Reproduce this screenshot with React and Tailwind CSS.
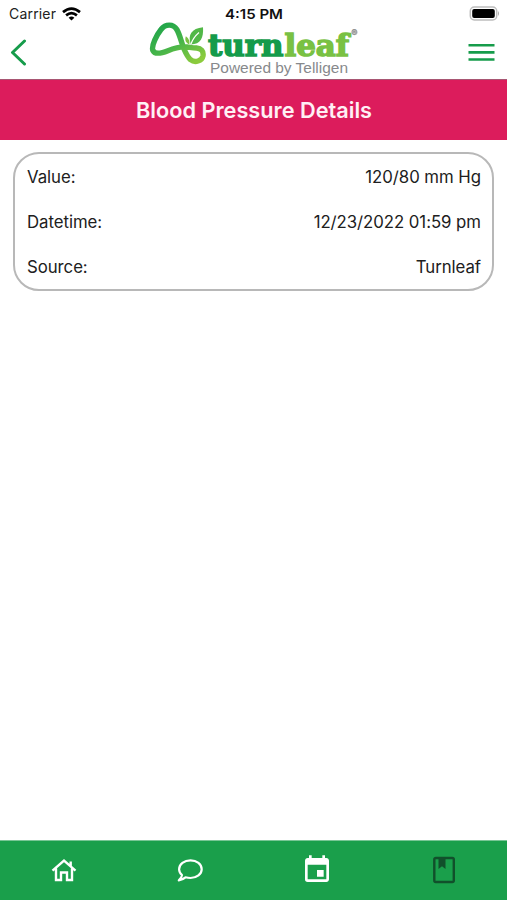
import { MdEvent } from 'react-icons/md';

const details = [
    { label: 'Value:', value: '120/80 mm Hg' },
    { label: 'Datetime:', value: '12/23/2022 01:59 pm' },
    { label: 'Source:', value: 'Turnleaf' },
];

function StatusBar() {
    return (
        <div className="grid h-[27px] grid-cols-3 items-center pl-[9px] pr-[7px] text-black">
            <div className="flex items-center gap-[6px]">
                <svg width="47" height="18" viewBox="0 0 47 18" className="font-['Inter',sans-serif]">
                    <text x="0" y="14" fontSize="14" textLength="47" fill="#222">Carrier</text>
                </svg>
                <svg width="19" height="14" viewBox="0 0 19 14" fill="none" stroke="black" strokeWidth="2.7">
                    <path d="M1 5.1Q9.5-2 18 5.1" />
                    <path d="M4.1 8.4Q9.5 4 14.9 8.4" />
                    <path d="M6.6 10.7Q9.5 8.4 12.4 10.7L9.5 13.6Z" fill="black" stroke="none" />
                </svg>
            </div>
            <div className="flex justify-center">
                <svg width="58" height="18" viewBox="0 0 58 18" className="font-['Inter',sans-serif]">
                    <text x="0" y="14" fontSize="13.5" fontWeight="600" textLength="58" lengthAdjust="spacingAndGlyphs" fill="#111">4:15 PM</text>
                </svg>
            </div>
            <svg width="31" height="15" viewBox="0 0 31 15" className="justify-self-end">
                <rect x="1.3" y="1" width="26.4" height="13" rx="4" fill="white" stroke="#bdbdbd" strokeWidth="1.5" />
                <rect x="3.2" y="3" width="22.6" height="9" rx="2" fill="black" />
                <path d="M29 5Q31 7.5 29 10Z" fill="#aaa" />
            </svg>
        </div>
    );
}

function Logo() {
    return (
        <svg width="210" height="58" viewBox="149 19 210 58" fill="none">
            <defs>
                <linearGradient id="loop" gradientUnits="userSpaceOnUse" x1="168" y1="22" x2="192" y2="64">
                    <stop offset="0" stopColor="#22a64a" />
                    <stop offset="0.5" stopColor="#4ab649" />
                    <stop offset="1" stopColor="#8ccb3d" />
                </linearGradient>
            </defs>
            <path
                d="M187 47C180 46.4 174 48.2 168 50.7C161 53.5 154.8 54.5 152.9 50.5C151 46 157 34.5 161 29.5C165.5 23.6 173.3 23.6 176.8 29.5C180 35 181.2 42 184 49C185.8 53.2 187.5 57 190.500 59.7C195 63.2 202 61 203 56C203.8 51.2 201 48.4 196.500 48C193 47.8 190.500 47.4 187 47Z"
                stroke="url(#loop)"
                strokeWidth="5.4"
            />
            <path d="M190.8 44.5C187.5 34.5 191.5 28.5 203 27.2C203.7 38 200.7 44 190.8 44.5Z" fill="#52b848" />
            <path d="M191 44C192.5 39.5 195 36 199 32.5" stroke="white" strokeWidth="1.1" />
            <path d="M189.3 44.5C185.3 42.5 184.6 39.5 185.9 36.2C188.9 38.5 190 41 189.3 44.5Z" fill="#7cc144" />
            <g className="font-['DejaVu_Serif',serif] font-bold" fontSize="30.5" strokeWidth="1.5">
                <text x="208" y="55.5" textLength="75.5" lengthAdjust="spacingAndGlyphs" fill="#149b4b" stroke="#149b4b">turn</text>
                <text x="284.5" y="55.5" textLength="64.5" lengthAdjust="spacingAndGlyphs" fill="#79c143" stroke="#79c143">leaf</text>
            </g>
            <circle cx="354.5" cy="32.3" r="3" fill="#c4c4c4" />
            <text x="351.3" y="35.5" fontSize="9" fill="#888" className="font-['Inter',sans-serif]">®</text>
            <text x="210" y="72.5" fontSize="14.5" textLength="138" lengthAdjust="spacingAndGlyphs" fill="#87898c" className="font-['Liberation_Sans',sans-serif]">Powered by Telligen</text>
        </svg>
    );
}

function Header() {
    return (
        <header className="flex h-[52px] items-start justify-between pl-[10px] pr-3">
            <button className="mt-3" aria-label="Back">
                <svg width="17" height="27" viewBox="0 0 17 27" fill="none" stroke="#169c4b" strokeWidth="3" strokeLinecap="round" strokeLinejoin="round">
                    <path d="M14.5 2L2.5 13.5L14.5 25" />
                </svg>
            </button>
            <div className="-mt-2 ml-[12px]">
                <Logo />
            </div>
            <button className="mt-4" aria-label="Menu">
                <svg width="27" height="19" viewBox="0 0 27 19" fill="#169c4b">
                    <path d="M0.5 1h26v2.6h-26zM0.5 8.1h26v2.6h-26zM0.5 15.2h26v2.6h-26z" />
                </svg>
            </button>
        </header>
    );
}

function TabBar() {
    return (
        <nav className="grid h-[60px] grid-cols-4 place-items-center border-t border-[#79c695] bg-[#1a9f4b] text-white">
            <button aria-label="Home" className="-mt-[2px] pl-[2px]">
                <svg width="28" height="28" viewBox="0 0 28 28" fill="none" stroke="currentColor" strokeWidth="2.4">
                    <path d="M2.5 14.7L14 4.7L25.5 14.7M6 12.5V24H11V16.5H17V24H22V12.5M20.7 5.5V10" />
                </svg>
            </button>
            <button aria-label="Messages" className="-mt-[2px]">
                <svg width="28" height="28" viewBox="0 0 28 28" fill="none" stroke="currentColor" strokeWidth="2.2" strokeLinejoin="round">
                    <path d="M6 19C4 17.3 3.1 15.5 3.1 13.2C3.1 8.2 8.2 4.3 14.5 4.3C20.8 4.3 25.7 8.2 25.7 13.2C25.7 18.2 20.8 22 14.5 22C12.6 22 11 21.700 9.5 21.3C7.5 23 5.5 24 2.8 24.3C4.5 22.8 5.9 21 6 19Z" />
                </svg>
            </button>
            <button aria-label="Calendar" className="-mt-px">
                <MdEvent size={32} />
            </button>
            <button aria-label="Journal" className="-mt-px">
                <svg width="28" height="28" viewBox="0 0 28 28" fill="none" stroke="#11502b" strokeWidth="2.4">
                    <rect x="4.3" y="2" width="19.5" height="24" rx="1.5" />
                    <path d="M8.5 2H15.5V13L12 10.3L8.5 13Z" fill="#11502b" stroke="none" />
                </svg>
            </button>
        </nav>
    );
}

export default function App() {
    return (
        <div className="flex h-[900px] w-full flex-col bg-white font-['Inter',sans-serif]">
            <StatusBar />
            <Header />
            <div className="flex h-[61px] items-center justify-center border-t border-[#a85673] bg-[#dc1c5c]">
                <svg width="238" height="34" viewBox="0 0 238 34">
                    <text x="1" y="24.5" fontSize="22" fontWeight="600" textLength="236" lengthAdjust="spacingAndGlyphs" fill="#fff0f5">Blood Pressure Details</text>
                </svg>
            </div>
            <main className="flex-1 px-[13px] pt-3">
                <dl className="h-[139px] rounded-[26px] border-2 border-[#b8b8b8] pl-3 pr-[11px] pt-px text-[16.8px] tracking-[-0.05px] text-[#202020]">
                    {details.map((row) => (
                        <div key={row.label} className="flex h-[45px] items-center justify-between">
                            <dt>{row.label}</dt>
                            <dd>{row.value}</dd>
                        </div>
                    ))}
                </dl>
            </main>
            <TabBar />
        </div>
    );
}
